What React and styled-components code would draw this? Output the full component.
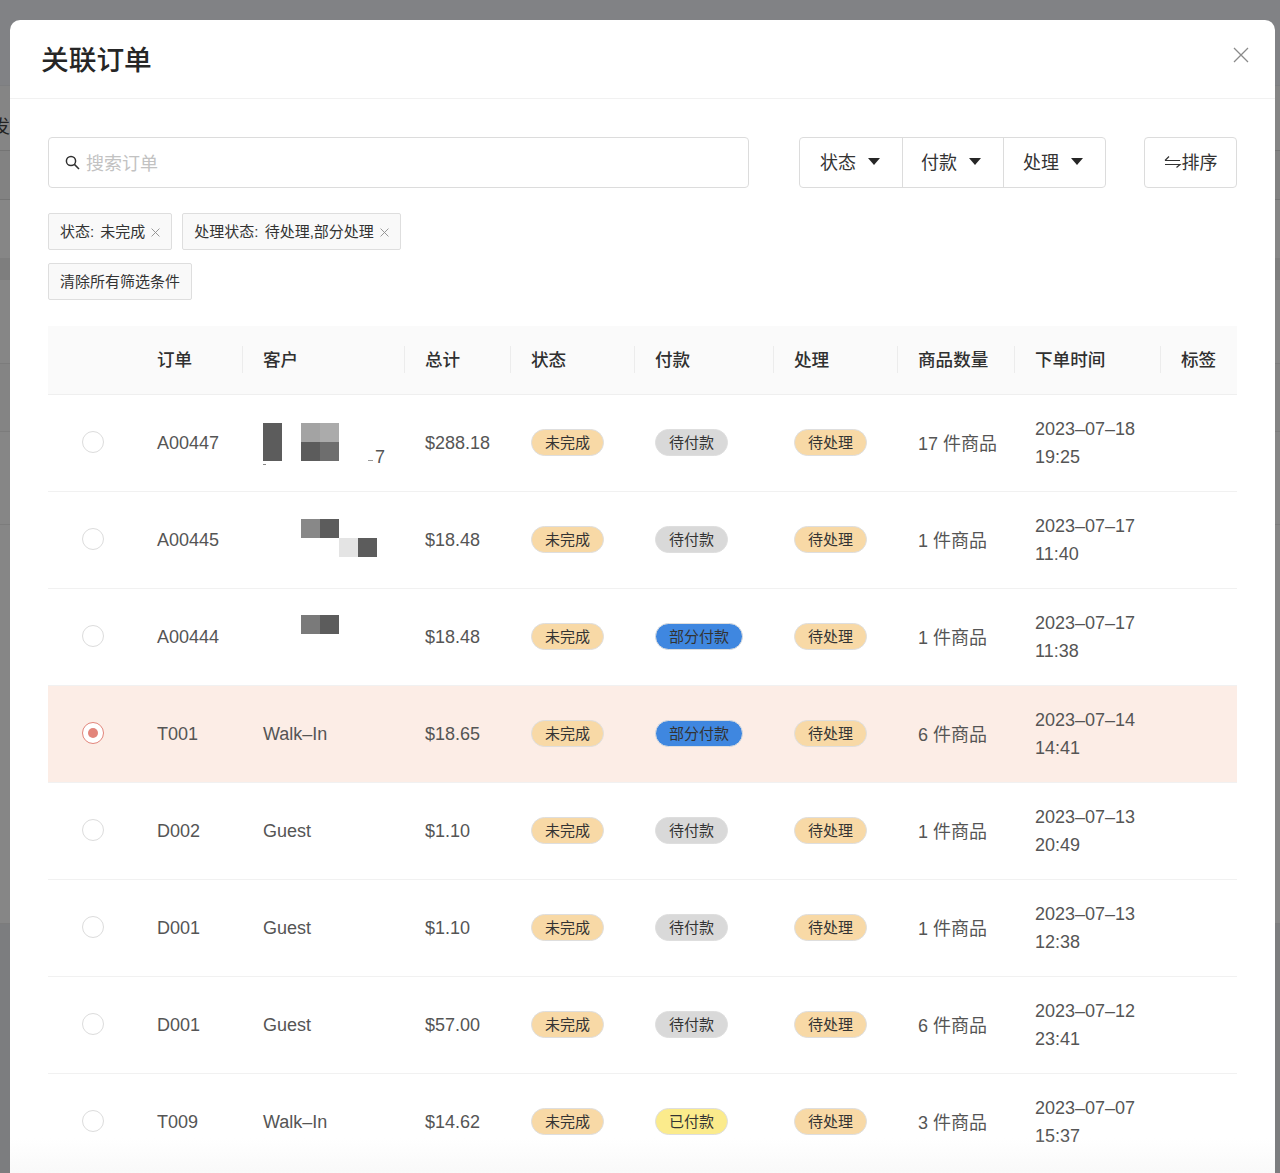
import React from "react";
import styled, { createGlobalStyle } from "styled-components";

const GlobalStyle = createGlobalStyle`
  html, body {
    margin: 0;
    height: 100%;
    overflow: hidden;
    background: #858585;
  }
  body {
    font-family: "Liberation Sans", "Noto Sans CJK SC", sans-serif;
    color: #303030;
  }
`;

const Backdrop = styled.div`
  height: 1173px;
  padding: 20px 5px 0 10px;
  box-sizing: border-box;
  overflow: hidden;
  position: relative;
`;

const BehindPage = styled.div`
  position: absolute;
  inset: 0;
  display: flex;
  flex-direction: column;
`;

const BehindRow = styled.div`
  height: ${(p) => p.$h}px;
  flex-shrink: 0;
  background: ${(p) => p.$bg || "transparent"};
  border-bottom: 1px solid ${(p) => p.$line || "transparent"};
  box-sizing: border-box;
  display: flex;
  align-items: center;
  padding-top: ${(p) => (p.$text ? 14 : 0)}px;
  font-size: 18px;
  color: #222;
  text-indent: -8px;
  overflow: hidden;
`;

const Modal = styled.div`
  position: relative;
  background: #fff;
  border-radius: 10px 10px 0 0;
  height: 1153px;
  overflow: hidden;
`;

const Header = styled.header`
  height: 79px;
  box-sizing: border-box;
  border-bottom: 1px solid #f1f1f1;
  display: flex;
  align-items: center;
  justify-content: space-between;
  padding: 0 26px 2px 31px;
`;

const Title = styled.h1`
  margin: 0;
  font-size: 27.7px;
  font-weight: 500;
  color: #262626;
`;

const CloseButton = styled.button`
  border: 0;
  padding: 0;
  background: none;
  color: #8a8a8a;
  display: flex;
  margin-top: -6px;
`;

const Body = styled.div`
  padding: 38px 38px 0;
`;

const Toolbar = styled.div`
  display: flex;
  align-items: stretch;
  height: 51px;
`;

const Search = styled.div`
  width: 701px;
  box-sizing: border-box;
  border: 1px solid #dcdcdc;
  border-radius: 4px;
  display: flex;
  align-items: center;
  padding: 0 0 1px 16px;
  gap: 6px;
  font-size: 18px;
  color: #c2c2c2;
`;

const FilterGroup = styled.div`
  display: flex;
  margin-left: 50px;
  border: 1px solid #dcdcdc;
  border-radius: 4px;
`;

const FilterButton = styled.div`
  display: flex;
  align-items: center;
  gap: 12px;
  padding: 0 0 3px ${(p) => p.$pad}px;
  width: ${(p) => p.$width}px;
  box-sizing: border-box;
  font-size: 18px;
  color: #333;
  & + & {
    border-left: 1px solid #dcdcdc;
  }
`;

const Caret = styled.span`
  width: 0;
  height: 0;
  margin-top: 1px;
  border-left: 6.5px solid transparent;
  border-right: 6.5px solid transparent;
  border-top: 7px solid #262626;
`;

const SortButton = styled.div`
  margin-left: 38px;
  width: 93px;
  box-sizing: border-box;
  border: 1px solid #dcdcdc;
  border-radius: 4px;
  display: flex;
  align-items: center;
  justify-content: center;
  padding-bottom: 3px;
  font-size: 18px;
  color: #333;
`;

const Chips = styled.div`
  display: flex;
  flex-wrap: wrap;
  gap: 13px 10px;
  margin-top: 25px;
  width: 400px;
`;

const Chip = styled.div`
  height: 37px;
  box-sizing: border-box;
  border: 1px solid #dedede;
  border-radius: 2px;
  background: #f9f9f9;
  display: flex;
  align-items: center;
  gap: 6px;
  padding: 0 11px 3px;
  font-size: 15px;
  word-spacing: 2px;
  color: #333;
  svg {
    color: #8c8c8c;
    margin-top: 4px;
  }
`;

const Table = styled.table`
  width: 1189px;
  margin-top: 26px;
  border-collapse: collapse;
  table-layout: fixed;
  font-size: 18px;
  color: #555;
`;

const HeadRow = styled.tr`
  height: 68px;
  background: #fafafa;
  border-bottom: 1px solid #efefef;
`;

const HeadCell = styled.th`
  position: relative;
  text-align: left;
  padding: 0 0 2px 21px;
  font-size: 17.6px;
  font-weight: 500;
  color: #303030;
  &:nth-child(2) {
    padding-left: 0;
  }
  & + &:not(:nth-child(2))::before {
    content: "";
    position: absolute;
    left: 0;
    top: 20px;
    height: 27px;
    width: 1px;
    background: #ececec;
  }
`;

const Row = styled.tr`
  height: 97px;
  border-bottom: 1px solid #f1f1f1;
  background: ${(p) => (p.$selected ? "#fcede6" : "transparent")};
`;

const Cell = styled.td`
  padding: 0 0 0 21px;
  &:nth-child(2) {
    padding-left: 0;
  }
`;

const TextCell = styled(Cell)`
  padding-top: 2px;
`;

const ItemsCell = styled(Cell)`
  padding-bottom: 2px;
`;

const RadioCell = styled.td`
  padding: 0 0 2px 34px;
`;

const Radio = styled.span`
  display: block;
  width: 22px;
  height: 22px;
  box-sizing: border-box;
  border-radius: 50%;
  border: 1px solid ${(p) => (p.$checked ? "#e2857b" : "#dcdcdc")};
  background: #fff;
  position: relative;
  ${(p) =>
    p.$checked &&
    `&::after {
      content: "";
      position: absolute;
      inset: 5px;
      border-radius: 50%;
      background: #e2857b;
    }`}
`;

const Badge = styled.span`
  display: inline-block;
  height: 27px;
  line-height: 26px;
  box-sizing: border-box;
  padding: 0 13px;
  border-radius: 14px;
  border: 1px solid #dedede;
  font-size: 15px;
  color: #333;
  background: ${(p) => p.$bg};
  vertical-align: middle;
`;

const DateText = styled.div`
  line-height: 28px;
`;

const CustomerMask = styled.div`
  position: relative;
  height: 40px;
`;

const Pixel = styled.span`
  position: absolute;
  left: ${(p) => p.$x}px;
  top: ${(p) => p.$y}px;
  width: ${(p) => p.$w || 19}px;
  height: ${(p) => p.$h || 19}px;
  background: ${(p) => p.$c};
`;

const Suffix = styled.span`
  position: absolute;
  left: 112px;
  top: 24px;
  font-size: 18px;
`;

const Fade = styled.div`
  position: absolute;
  left: 10px;
  right: 5px;
  bottom: 0;
  height: 35px;
  background: linear-gradient(rgba(250, 250, 250, 0), rgba(249, 249, 249, 1));
  pointer-events: none;
`;

const SearchIcon = () => (
  <svg width="15" height="15" viewBox="0 0 15 15" fill="none" stroke="#303030" strokeWidth="1.5">
    <circle cx="6" cy="6" r="4.6" />
    <path d="M9.4 9.4L14 14" />
  </svg>
);

const CloseIcon = ({ size, stroke = 1.3 }) => (
  <svg width={size} height={size} viewBox="0 0 16 16" fill="none" stroke="currentColor" strokeWidth={stroke}>
    <path d="M1 1l14 14M15 1L1 15" />
  </svg>
);

const SortIcon = () => (
  <svg width="18" height="16" viewBox="0 0 18 16" fill="none" stroke="#333" strokeWidth="1.2">
    <path d="M1 7.5h15M5 3.5L1 7.5M1 11.5h15l-3.5 3" />
  </svg>
);

const badgeColors = {
  未完成: "#f8d9a6",
  待处理: "#f8d9a6",
  待付款: "#d9d9d9",
  部分付款: "#3f87e0",
  已付款: "#fbeb8c",
};

const masks = {
  A00447: [
    { x: 0, y: 0, w: 19, h: 38, c: "#5c5c5c" },
    { x: 0, y: 41, w: 3, h: 1, c: "#888" },
    { x: 38, y: 0, c: "#a3a3a3" },
    { x: 57, y: 0, c: "#ababab" },
    { x: 38, y: 19, c: "#5c5c5c" },
    { x: 57, y: 19, c: "#6e6e6e" },
    { x: 105, y: 37, w: 5, h: 1, c: "#999" },
  ],
  A00445: [
    { x: 38, y: -1, c: "#888" },
    { x: 57, y: -1, c: "#5c5c5c" },
    { x: 76, y: 18, c: "#e4e4e4" },
    { x: 95, y: 18, c: "#5c5c5c" },
  ],
  A00444: [
    { x: 38, y: -2, c: "#7a7a7a" },
    { x: 57, y: -2, c: "#5c5c5c" },
  ],
};

const orders = [
  { id: "A00447", total: "$288.18", pay: "待付款", items: "17 件商品", date: "2023–07–18", time: "19:25" },
  { id: "A00445", total: "$18.48", pay: "待付款", items: "1 件商品", date: "2023–07–17", time: "11:40" },
  { id: "A00444", total: "$18.48", pay: "部分付款", items: "1 件商品", date: "2023–07–17", time: "11:38" },
  { id: "T001", customer: "Walk–In", total: "$18.65", pay: "部分付款", items: "6 件商品", date: "2023–07–14", time: "14:41", selected: true },
  { id: "D002", customer: "Guest", total: "$1.10", pay: "待付款", items: "1 件商品", date: "2023–07–13", time: "20:49" },
  { id: "D001", customer: "Guest", total: "$1.10", pay: "待付款", items: "1 件商品", date: "2023–07–13", time: "12:38" },
  { id: "D001", customer: "Guest", total: "$57.00", pay: "待付款", items: "6 件商品", date: "2023–07–12", time: "23:41" },
  { id: "T009", customer: "Walk–In", total: "$14.62", pay: "已付款", items: "3 件商品", date: "2023–07–07", time: "15:37" },
];

const columns = [
  { label: "", width: 109 },
  { label: "订单", width: 85 },
  { label: "客户", width: 162 },
  { label: "总计", width: 106 },
  { label: "状态", width: 124 },
  { label: "付款", width: 139 },
  { label: "处理", width: 124 },
  { label: "商品数量", width: 117 },
  { label: "下单时间", width: 146 },
  { label: "标签", width: 77 },
];

const behindRows = [
  { h: 86, bg: "#818285", line: "#7d7e80" },
  { h: 65, bg: "#858585", line: "#747474", text: "发" },
  { h: 49, bg: "#828282", line: "#747474" },
  { h: 58, bg: "#868686" },
  { h: 22, bg: "#7e7e7e" },
  { h: 84, bg: "#868686", line: "#7c7c7c" },
  { h: 68, bg: "#848484", line: "#7c7c7c" },
  { h: 93, bg: "#868686", line: "#7c7c7c" },
  { h: 399, bg: "#868686", line: "#7c7c7c" },
  { h: 249, bg: "#7c7d7f" },
];

export default function App() {
  return (
    <>
      <GlobalStyle />
      <Backdrop>
        <BehindPage>
          {behindRows.map((r) => (
            <BehindRow key={r.h} $h={r.h} $bg={r.bg} $line={r.line} $text={r.text}>
              {r.text}
            </BehindRow>
          ))}
        </BehindPage>
        <Modal>
          <Header>
            <Title>关联订单</Title>
            <CloseButton>
              <CloseIcon size={16} />
            </CloseButton>
          </Header>
          <Body>
            <Toolbar>
              <Search>
                <SearchIcon />
                搜索订单
              </Search>
              <FilterGroup>
                <FilterButton $width={102} $pad={20}>状态<Caret /></FilterButton>
                <FilterButton $width={101} $pad={18}>付款<Caret /></FilterButton>
                <FilterButton $width={102} $pad={19}>处理<Caret /></FilterButton>
              </FilterGroup>
              <SortButton>
                <SortIcon />
                排序
              </SortButton>
            </Toolbar>
            <Chips>
              <Chip>状态: 未完成 <CloseIcon size={9} stroke={1.6} /></Chip>
              <Chip>处理状态: 待处理,部分处理 <CloseIcon size={9} stroke={1.6} /></Chip>
              <Chip>清除所有筛选条件</Chip>
            </Chips>
            <Table>
              <colgroup>
                {columns.map((c) => (
                  <col key={c.label} width={c.width} />
                ))}
              </colgroup>
              <thead>
                <HeadRow>
                  {columns.map((c) => (
                    <HeadCell key={c.label}>{c.label}</HeadCell>
                  ))}
                </HeadRow>
              </thead>
              <tbody>
                {orders.map((o) => (
                  <Row key={o.id + o.total} $selected={o.selected}>
                    <RadioCell>
                      <Radio $checked={o.selected} />
                    </RadioCell>
                    <TextCell>{o.id}</TextCell>
                    {masks[o.id] ? (
                      <Cell>
                        <CustomerMask>
                          {masks[o.id].map((m) => (
                            <Pixel key={`${m.x}-${m.y}`} $x={m.x} $y={m.y} $w={m.w} $h={m.h} $c={m.c} />
                          ))}
                          {o.id === "A00447" && <Suffix>7</Suffix>}
                        </CustomerMask>
                      </Cell>
                    ) : (
                      <TextCell>{o.customer}</TextCell>
                    )}
                    <TextCell>{o.total}</TextCell>
                    <Cell><Badge $bg={badgeColors["未完成"]}>未完成</Badge></Cell>
                    <Cell><Badge $bg={badgeColors[o.pay]}>{o.pay}</Badge></Cell>
                    <Cell><Badge $bg={badgeColors["待处理"]}>待处理</Badge></Cell>
                    <ItemsCell>{o.items}</ItemsCell>
                    <Cell>
                      <DateText>{o.date}<br />{o.time}</DateText>
                    </Cell>
                    <Cell />
                  </Row>
                ))}
              </tbody>
            </Table>
          </Body>
        </Modal>
        <Fade />
      </Backdrop>
    </>
  );
}
